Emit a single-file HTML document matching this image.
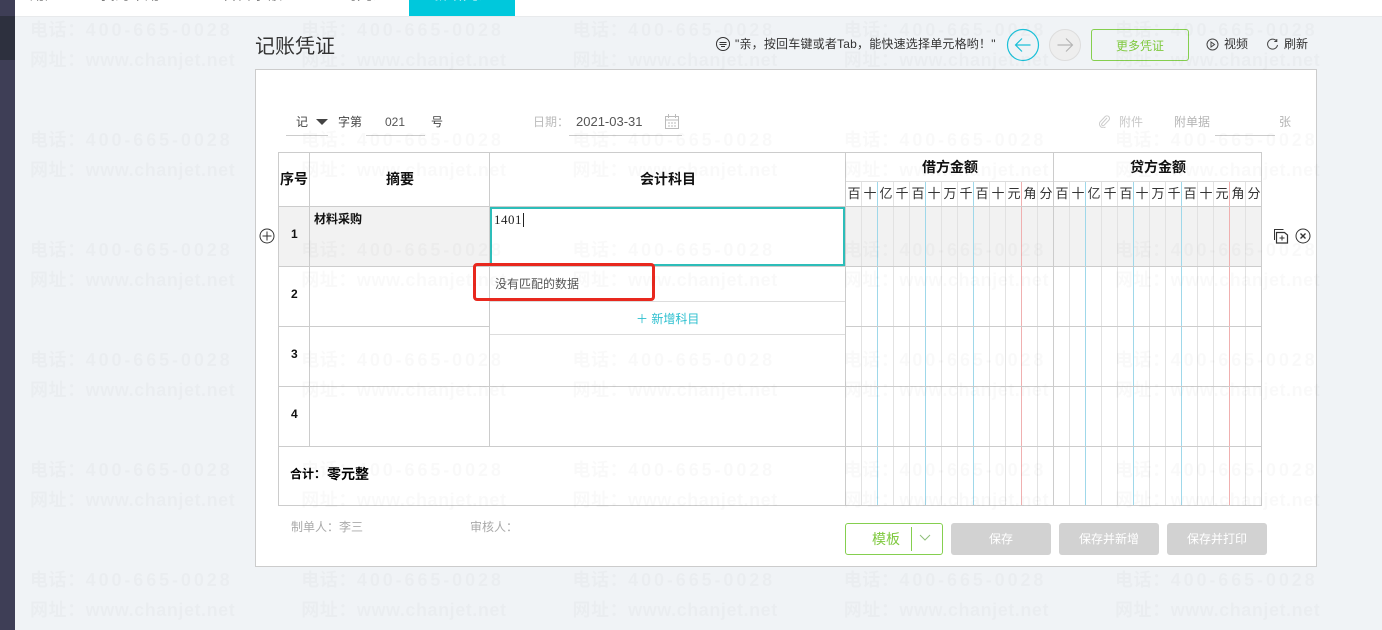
<!DOCTYPE html>
<html lang="zh"><head><meta charset="utf-8"><title>记账凭证</title>
<style>
html,body{margin:0;padding:0;width:1382px;height:630px;overflow:hidden;background:#f0f3f6;font-family:"Liberation Sans","Noto Sans CJK SC",sans-serif;font-size:12px;color:#333}
.a{position:absolute}
.t{position:absolute;white-space:nowrap;line-height:16px}
.b{font-weight:bold;color:#111}
.wm{position:absolute;left:30px;white-space:nowrap;font-size:18px;line-height:24px;font-weight:bold;color:rgba(0,0,0,.024);letter-spacing:.55px}
.wm span{display:inline-block;width:271.25px}
.wm.p i{font-style:normal;letter-spacing:2.9px}
.u{position:absolute;top:186px;width:16px;text-align:center;font-size:13px;line-height:16px;color:#333}
.btn{position:absolute;top:523px;width:100px;height:32px;background:#d2d2d2;border-radius:3px;color:#fff;text-align:center;line-height:33px;font-size:12px}
.v{position:absolute;top:181px;width:1px;height:325px;background:#e2e2e2}
.c{background:#9fd8ea}
.r{background:#f0b0b0}
.h{position:absolute;left:278px;width:984px;height:1px;background:#ccc}
.s{position:absolute;top:152px;width:1px;background:#ccc}
</style></head><body>
<div class="a" style="left:0;top:0;width:15px;height:630px;background:#3e3e56"></div>
<div class="a" style="left:0;top:16px;width:15px;height:44px;background:#2d303e"></div>
<div class="a" style="left:15px;top:0;width:1367px;height:16px;background:#fff;border-bottom:1px solid #e8eaec;overflow:hidden">
<div class="t" style="left:15px;top:-13px;font-size:15px;color:#333">用户</div>
<div class="t" style="left:85px;top:-13px;font-size:15px;color:#333">我的常用</div>
<div class="t" style="left:207px;top:-13px;font-size:15px;color:#333">科目余额</div>
<div class="t" style="left:312px;top:-13px;font-size:15px;color:#333">查询凭证</div>
<div class="a" style="left:394px;top:0;width:106px;height:16px;background:#00c8dc"></div>
<div class="t" style="left:418px;top:-13px;font-size:15px;color:#fff">新增凭证</div>
</div>

<div class="t" style="left:255px;top:35px;font-size:20px;line-height:24px;color:#333">记账凭证</div>
<svg class="a" style="left:715px;top:36px" width="16" height="16" viewBox="0 0 16 16" fill="none" stroke="#333"><circle cx="8" cy="8" r="6.5"/><path d="M4.500 6.500h7M4.500 8.500h7M6 10.500h4"/></svg>
<div class="t" style="left:735px;top:36px;color:#333;letter-spacing:.2px">"亲，按回车键或者Tab，能快速选择单元格哟！"</div>
<svg class="a" style="left:1006px;top:28px" width="34" height="34" viewBox="0 0 34 34" fill="none"><circle cx="17" cy="17" r="15.500" stroke="#1cc0d8" stroke-width="1.200"/><path d="M9.500 17h15M16 10.500L9.500 17l6.500 6.500" stroke="#1cc0d8" stroke-width="1.200"/></svg>
<svg class="a" style="left:1048px;top:28px" width="34" height="34" viewBox="0 0 34 34" fill="none"><circle cx="17" cy="17" r="15.500" stroke="#ddd" fill="#eeeeee"/><path d="M9.500 17h15M18 10.500l6.500 6.500-6.500 6.500" stroke="#b5b5b5" stroke-width="1.200"/></svg>
<div class="a" style="left:1091px;top:29px;width:96px;height:30px;border:1px solid #85cf4f;border-radius:3px;color:#7fc93f;text-align:center;line-height:32px">更多凭证</div>
<svg class="a" style="left:1206px;top:38px" width="13" height="13" viewBox="0 0 13 13" fill="none" stroke="#444"><circle cx="6.500" cy="6.500" r="5.500"/><path d="M5 4l3.500 2.500L5 9z"/></svg>
<div class="t" style="left:1224px;top:36px">视频</div>
<svg class="a" style="left:1266px;top:38px" width="13" height="13" viewBox="0 0 13 13" fill="none" stroke="#444"><path d="M10.500 3A5 5 0 1 0 11.500 7"/><path d="M10.800 1v2.500H8.300"/></svg>
<div class="t" style="left:1284px;top:36px">刷新</div>

<div class="a" style="left:255px;top:69px;width:1060px;height:496px;background:#fff;border:1px solid #ccc"></div>

<div class="t" style="left:296px;top:114px;color:#444">记</div>
<div class="a" style="left:316px;top:119px;width:0;height:0;border-left:6px solid transparent;border-right:6px solid transparent;border-top:6px solid #444"></div>
<div class="t" style="left:338px;top:114px;color:#444">字第</div>
<div class="t" style="left:385px;top:114px;color:#555">021</div>
<div class="t" style="left:431px;top:114px;color:#444">号</div>
<div class="a" style="left:286px;top:135px;width:42px;height:1px;background:#ccc"></div>
<div class="a" style="left:366px;top:135px;width:59px;height:1px;background:#ccc"></div>
<div class="t" style="left:533px;top:114px;color:#bbb">日期：</div>
<div class="t" style="left:576px;top:114px;font-size:13px;color:#555">2021-03-31</div>
<div class="a" style="left:569px;top:135px;width:113px;height:1px;background:#ccc"></div>
<svg class="a" style="left:664px;top:114px" width="16" height="15" viewBox="0 0 16 15" fill="none" stroke="#bbb"><path d="M1.500 2.500h13v12h-13zM1.500 6h13M4.500 0v4M11.500 0v4M4 9h2M7 9h2M10 9h2M4 12h2M7 12h2M10 12h2"/></svg>
<svg class="a" style="left:1098px;top:115px" width="13" height="13" viewBox="0 0 13 13" fill="none" stroke="#ccc"><path d="M9 3L4 8.500a1.300 1.300 0 0 0 2 1.800L11 5a2.600 2.600 0 0 0-3.800-3.500L2 7a3.800 3.800 0 0 0 5.500 5"/></svg>
<div class="t" style="left:1119px;top:114px;color:#c8c8c8">附件</div>
<div class="t" style="left:1174px;top:114px;color:#b5b5b5">附单据</div>
<div class="t" style="left:1279px;top:114px;color:#b5b5b5">张</div>
<div class="a" style="left:1215px;top:135px;width:60px;height:1px;background:#ccc"></div>

<div class="a" style="left:279px;top:207px;width:982px;height:59px;background:#f2f2f2"></div>

<div class="v" style="left:861px"></div><div class="v c" style="left:877px"></div><div class="v" style="left:893px"></div><div class="v" style="left:909px"></div><div class="v c" style="left:925px"></div><div class="v" style="left:941px"></div><div class="v" style="left:957px"></div><div class="v c" style="left:973px"></div><div class="v" style="left:989px"></div><div class="v" style="left:1005px"></div><div class="v r" style="left:1021px"></div><div class="v" style="left:1037px"></div>
<div class="v" style="left:1069px"></div><div class="v c" style="left:1085px"></div><div class="v" style="left:1101px"></div><div class="v" style="left:1117px"></div><div class="v c" style="left:1133px"></div><div class="v" style="left:1149px"></div><div class="v" style="left:1165px"></div><div class="v c" style="left:1181px"></div><div class="v" style="left:1197px"></div><div class="v" style="left:1213px"></div><div class="v r" style="left:1229px"></div><div class="v" style="left:1245px"></div>

<div class="h" style="top:152px"></div><div class="h" style="top:206px"></div><div class="h" style="top:266px"></div><div class="h" style="top:326px"></div><div class="h" style="top:386px"></div><div class="h" style="top:446px"></div><div class="h" style="top:505px"></div>
<div class="a" style="left:845px;top:181px;width:417px;height:1px;background:#ddd"></div>
<div class="s" style="left:278px;height:354px"></div><div class="s" style="left:309px;height:294px"></div><div class="s" style="left:489px;height:294px"></div><div class="s" style="left:845px;height:354px"></div><div class="s" style="left:1053px;height:354px"></div><div class="s" style="left:1261px;height:354px"></div>

<div class="a" style="left:490px;top:267px;width:355px;height:119px;background:#fff"></div>
<div class="a" style="left:490px;top:301px;width:355px;height:1px;background:#ddd"></div>
<div class="a" style="left:490px;top:334px;width:355px;height:1px;background:#ddd"></div>
<div class="a" style="left:490px;top:207px;width:351px;height:55px;border:2px solid #2dbdb9;background:#fff"></div>
<div class="t" style="left:494px;top:212px;font-family:'Liberation Serif',serif;font-size:13px;color:#222;letter-spacing:.5px">1401</div>
<div class="a" style="left:523px;top:213px;width:1px;height:14px;background:#222"></div>
<div class="t" style="left:495px;top:276px;color:#555">没有匹配的数据</div>
<div class="t" style="left:636px;top:311px;color:#2bbfcf">＋ 新增科目</div>
<div class="a" style="left:473px;top:263px;width:176px;height:32px;border:3px solid #e8281e;border-radius:4px"></div>

<div class="t b" style="left:280px;top:171px;font-size:14px">序号</div>
<div class="t b" style="left:386px;top:171px;font-size:14px">摘要</div>
<div class="t b" style="left:640px;top:171px;font-size:14px">会计科目</div>
<div class="t b" style="left:922px;top:159px;font-size:14px">借方金额</div>
<div class="t b" style="left:1130px;top:159px;font-size:14px">贷方金额</div>

<div class="u" style="left:846px">百</div><div class="u" style="left:862px">十</div><div class="u" style="left:878px">亿</div><div class="u" style="left:894px">千</div><div class="u" style="left:910px">百</div><div class="u" style="left:926px">十</div><div class="u" style="left:942px">万</div><div class="u" style="left:958px">千</div><div class="u" style="left:974px">百</div><div class="u" style="left:990px">十</div><div class="u" style="left:1006px">元</div><div class="u" style="left:1022px">角</div><div class="u" style="left:1038px">分</div>
<div class="u" style="left:1054px">百</div><div class="u" style="left:1070px">十</div><div class="u" style="left:1086px">亿</div><div class="u" style="left:1102px">千</div><div class="u" style="left:1118px">百</div><div class="u" style="left:1134px">十</div><div class="u" style="left:1150px">万</div><div class="u" style="left:1166px">千</div><div class="u" style="left:1182px">百</div><div class="u" style="left:1198px">十</div><div class="u" style="left:1214px">元</div><div class="u" style="left:1230px">角</div><div class="u" style="left:1246px">分</div>

<div class="t b" style="left:291px;top:226px">1</div>
<div class="t b" style="left:291px;top:286px">2</div>
<div class="t b" style="left:291px;top:346px">3</div>
<div class="t b" style="left:291px;top:406px">4</div>
<div class="t b" style="left:314px;top:211px">材料采购</div>
<div class="t b" style="left:290px;top:466px;font-size:12px;color:#000">合计：</div>
<div class="t b" style="left:327px;top:466px;font-size:14px;color:#000">零元整</div>
<div class="t" style="left:291px;top:519px;color:#aaa">制单人：李三</div>
<div class="t" style="left:470px;top:519px;color:#aaa">审核人：</div>

<svg class="a" style="left:259px;top:228px" width="16" height="16" viewBox="0 0 16 16" fill="none" stroke="#333"><circle cx="8" cy="8" r="7"/><path d="M3.500 8h9M8 3.500v9"/></svg>
<svg class="a" style="left:1273px;top:228px" width="16" height="16" viewBox="0 0 16 16" fill="none" stroke="#333"><path d="M10.500 1.500H1.500V12"/><path d="M3.500 4.500h8l3 2.500v8h-11z" stroke-width="1.200"/><path d="M9 7.500v5M6.500 10h5"/></svg>
<svg class="a" style="left:1295px;top:228px" width="16" height="16" viewBox="0 0 16 16" fill="none" stroke="#333"><circle cx="8" cy="8" r="7"/><path d="M5.500 5.500l5 5M10.500 5.500l-5 5" stroke-width="1.400"/></svg>

<div class="a" style="left:845px;top:523px;width:96px;height:30px;border:1px solid #85cf4f;border-radius:3px"></div>
<div class="t" style="left:872px;top:531px;font-size:14px;color:#7fc93f">模板</div>
<div class="a" style="left:911px;top:527px;width:1px;height:24px;background:#85cf4f"></div>
<svg class="a" style="left:919px;top:534px" width="12" height="8" viewBox="0 0 12 8" fill="none" stroke="#8fbf7a"><path d="M1 1l5 5 5-5"/></svg>
<div class="btn" style="left:951px">保存</div>
<div class="btn" style="left:1059px">保存并新增</div>
<div class="btn" style="left:1167px">保存并打印</div>

<div class="wm p" style="top:18px"><span>电话：<i>400-665-0028</i></span><span>电话：<i>400-665-0028</i></span><span>电话：<i>400-665-0028</i></span><span>电话：<i>400-665-0028</i></span><span>电话：<i>400-665-0028</i></span></div>
<div class="wm" style="top:48px"><span>网址：www.chanjet.net</span><span>网址：www.chanjet.net</span><span>网址：www.chanjet.net</span><span>网址：www.chanjet.net</span><span>网址：www.chanjet.net</span></div>
<div class="wm p" style="top:128px"><span>电话：<i>400-665-0028</i></span><span>电话：<i>400-665-0028</i></span><span>电话：<i>400-665-0028</i></span><span>电话：<i>400-665-0028</i></span><span>电话：<i>400-665-0028</i></span></div>
<div class="wm" style="top:158px"><span>网址：www.chanjet.net</span><span>网址：www.chanjet.net</span><span>网址：www.chanjet.net</span><span>网址：www.chanjet.net</span><span>网址：www.chanjet.net</span></div>
<div class="wm p" style="top:238px"><span>电话：<i>400-665-0028</i></span><span>电话：<i>400-665-0028</i></span><span>电话：<i>400-665-0028</i></span><span>电话：<i>400-665-0028</i></span><span>电话：<i>400-665-0028</i></span></div>
<div class="wm" style="top:268px"><span>网址：www.chanjet.net</span><span>网址：www.chanjet.net</span><span>网址：www.chanjet.net</span><span>网址：www.chanjet.net</span><span>网址：www.chanjet.net</span></div>
<div class="wm p" style="top:348px"><span>电话：<i>400-665-0028</i></span><span>电话：<i>400-665-0028</i></span><span>电话：<i>400-665-0028</i></span><span>电话：<i>400-665-0028</i></span><span>电话：<i>400-665-0028</i></span></div>
<div class="wm" style="top:378px"><span>网址：www.chanjet.net</span><span>网址：www.chanjet.net</span><span>网址：www.chanjet.net</span><span>网址：www.chanjet.net</span><span>网址：www.chanjet.net</span></div>
<div class="wm p" style="top:458px"><span>电话：<i>400-665-0028</i></span><span>电话：<i>400-665-0028</i></span><span>电话：<i>400-665-0028</i></span><span>电话：<i>400-665-0028</i></span><span>电话：<i>400-665-0028</i></span></div>
<div class="wm" style="top:488px"><span>网址：www.chanjet.net</span><span>网址：www.chanjet.net</span><span>网址：www.chanjet.net</span><span>网址：www.chanjet.net</span><span>网址：www.chanjet.net</span></div>
<div class="wm p" style="top:568px"><span>电话：<i>400-665-0028</i></span><span>电话：<i>400-665-0028</i></span><span>电话：<i>400-665-0028</i></span><span>电话：<i>400-665-0028</i></span><span>电话：<i>400-665-0028</i></span></div>
<div class="wm" style="top:598px"><span>网址：www.chanjet.net</span><span>网址：www.chanjet.net</span><span>网址：www.chanjet.net</span><span>网址：www.chanjet.net</span><span>网址：www.chanjet.net</span></div>
</body></html>
